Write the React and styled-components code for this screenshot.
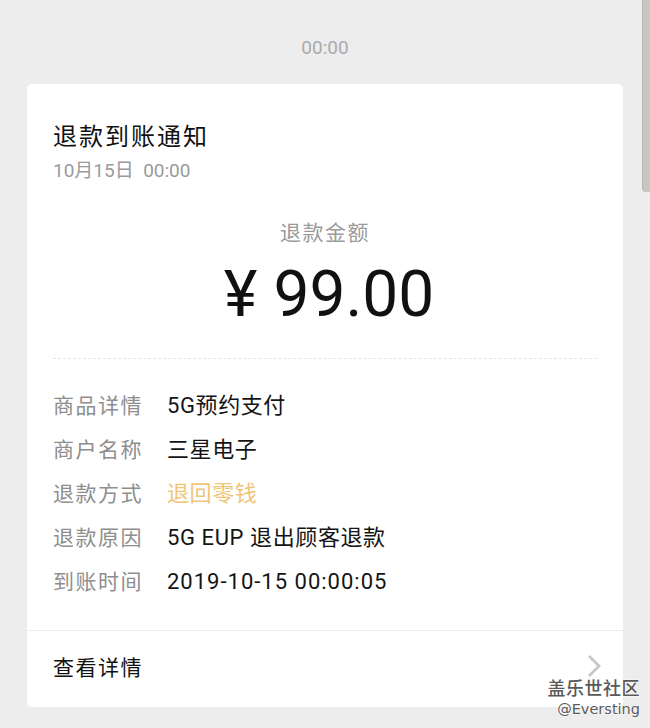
import React from 'react'
import styled, { createGlobalStyle } from 'styled-components'

const GlobalStyle = createGlobalStyle`
  html, body {
    margin: 0;
    padding: 0;
    background: #ededed;
  }
  body {
    font-family: "Roboto", "Noto Sans CJK SC", sans-serif;
  }
`

const Screen = styled.div`
  position: relative;
  width: 650px;
  height: 728px;
  overflow: hidden;
  background: #ededed;
  padding-top: 36px;
  box-sizing: border-box;
`

const Timestamp = styled.div`
  text-align: center;
  font-size: 19px;
  line-height: 24px;
  color: #ababab;
`

const Card = styled.div`
  margin: 24px 27px 0;
  background: #fff;
  border-radius: 5px;
  padding-bottom: 6px;
`

const Header = styled.div`
  padding: 37px 26px 0;
`

const Title = styled.div`
  font-size: 24px;
  line-height: 32px;
  letter-spacing: 2px;
  color: #111;
`

const DateLine = styled.div`
  margin-top: 6px;
  font-size: 19px;
  line-height: 24px;
  color: #9a9a9a;
  white-space: pre;
`

const AmountLabel = styled.div`
  margin-top: 35px;
  text-align: center;
  font-size: 21px;
  line-height: 30px;
  letter-spacing: 1.5px;
  color: #9a9a9a;
`

const Amount = styled.div`
  margin-top: 12px;
  padding-left: 8px;
  text-align: center;
  font-size: 64px;
  line-height: 70px;
  color: #111;
`

const Yen = styled.span`
  margin-right: 16px;
`

const Dashed = styled.div`
  margin: 28px 26px 0;
  border-top: 1px dashed #e6e6e6;
`

const Rows = styled.div`
  padding: 25px 26px 0;
`

const Row = styled.div`
  display: flex;
  align-items: baseline;
  line-height: 44px;
`

const Label = styled.span`
  width: 114px;
  flex: none;
  font-size: 21px;
  letter-spacing: 1.5px;
  color: #8e8e8e;
`

const Value = styled.span`
  font-size: 22px;
  color: ${props => (props.gold ? '#efc577' : '#141414')};
  letter-spacing: ${props => (props.numeric ? '1px' : '0.6px')};
`

const Divider = styled.div`
  margin-top: 26px;
  border-top: 1px solid #ececec;
`

const Footer = styled.div`
  display: flex;
  align-items: center;
  justify-content: space-between;
  height: 70px;
  padding: 0 22px 0 26px;
  font-size: 21px;
  letter-spacing: 1.5px;
  color: #111;
`

const Chevron = styled.svg`
  width: 14px;
  height: 24px;
`

const Scrollbar = styled.div`
  position: absolute;
  top: 0;
  right: 0;
  width: 7px;
  height: 192px;
  background: #c9c5c3;
  border-bottom-left-radius: 4px;
  box-shadow: -1px 0 0 #b9b5b3;
`

const Watermark = styled.div`
  position: absolute;
  right: 10px;
  bottom: 8px;
  text-align: right;
  color: #5a5a5a;
  text-shadow: 0 0 2px #fff, 0 0 2px #fff;
`

const WatermarkName = styled.div`
  font-family: "Noto Sans CJK SC", sans-serif;
  font-size: 18px;
  font-weight: 500;
  line-height: 22px;
  letter-spacing: 0.5px;
`

const WatermarkUser = styled.div`
  font-family: "DejaVu Sans", sans-serif;
  font-size: 14.5px;
  line-height: 22px;
`

const details = [
  { label: '商品详情', value: '5G预约支付' },
  { label: '商户名称', value: '三星电子' },
  { label: '退款方式', value: '退回零钱', gold: true },
  { label: '退款原因', value: '5G EUP 退出顾客退款' },
  { label: '到账时间', value: '2019-10-15 00:00:05', numeric: true },
]

export default function App() {
  return (
    <Screen>
      <GlobalStyle />
      <Scrollbar />
      <Timestamp>00:00</Timestamp>
      <Card>
        <Header>
          <Title>退款到账通知</Title>
          <DateLine>10月15日  00:00</DateLine>
        </Header>
        <AmountLabel>退款金额</AmountLabel>
        <Amount>
          <Yen>¥</Yen>99.00
        </Amount>
        <Dashed />
        <Rows>
          {details.map(d => (
            <Row key={d.label}>
              <Label>{d.label}</Label>
              <Value gold={d.gold} numeric={d.numeric}>{d.value}</Value>
            </Row>
          ))}
        </Rows>
        <Divider />
        <Footer>
          <span>查看详情</span>
          <Chevron viewBox="0 0 14 24">
            <path d="M2 2 L12 12 L2 22" fill="none" stroke="#c7c7c7" strokeWidth="2.8" />
          </Chevron>
        </Footer>
      </Card>
      <Watermark>
        <WatermarkName>盖乐世社区</WatermarkName>
        <WatermarkUser>@Eversting</WatermarkUser>
      </Watermark>
    </Screen>
  )
}
